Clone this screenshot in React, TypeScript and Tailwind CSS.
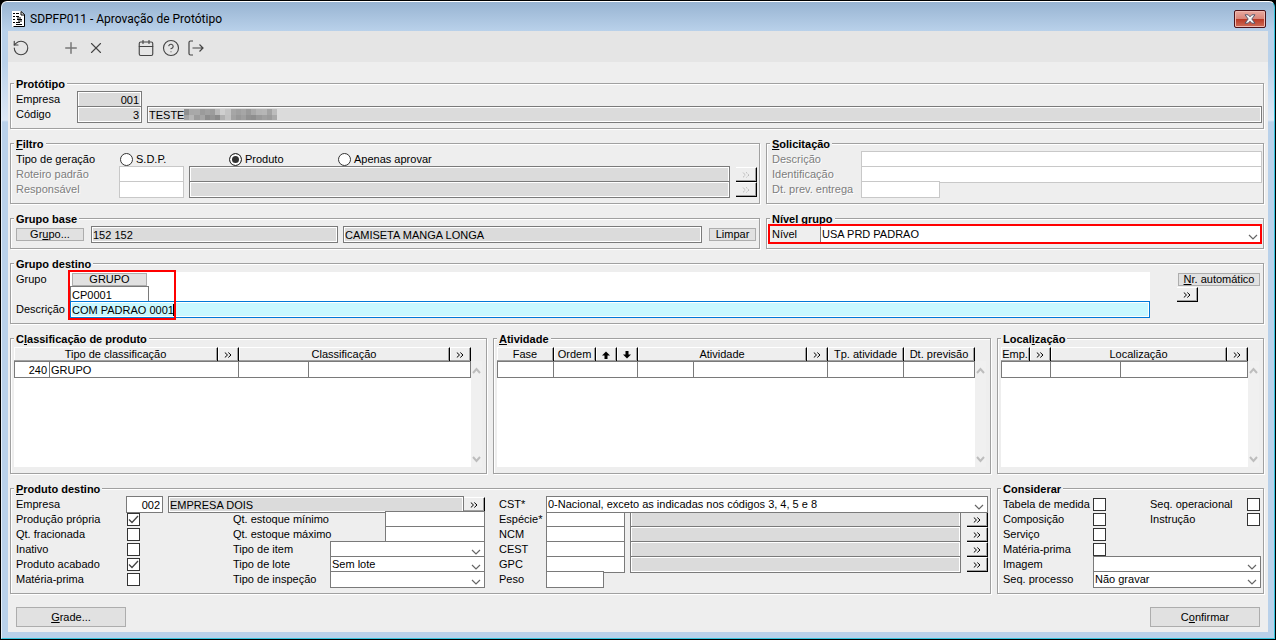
import React, { useState } from "react";
import { Calendar, CircleHelp, Plus, RotateCcw, X } from "lucide-react";

/* ---------- small drawings ---------- */

const ChevronsIcon = ({ faded = false }: { faded?: boolean }) => (
  <svg width="8" height="6" viewBox="0 0 8 6" fill="none" stroke={faded ? "#a5a5a5" : "#000"} strokeWidth="1" strokeDasharray={faded ? "1 1" : undefined} aria-hidden="true">
    <path d="M.8.5L3.500 3 .8 5.500M4.300.5L7 3 4.300 5.500" />
  </svg>
);

const DocumentIcon = () => (
  <svg width="13" height="16" viewBox="0 0 13 16" aria-hidden="true">
    <path d="M0 0h9l3 3v13h-12z" fill="#fff" />
    <path d="M9 0.500L12.500 3.500v12H1.500" fill="none" stroke="#000" />
    <path d="M9 .5v3.500h3.500" fill="none" stroke="#000" />
    <path d="M1 2.500h2M4 2.500h3M1 5.500h2M4 5.500h3M1 8.500h2M5 8.500h5M1 11.500h2M4 11.500h4M4 13.500h6M5 7h4M6 10h4" stroke="#000" />
  </svg>
);

const ExitIcon = () => (
  <svg width="18" height="18" viewBox="0 0 18 18" fill="none" stroke="#444" strokeWidth="1.2" aria-hidden="true">
    <path d="M6 2H3.5Q2 2 2 3.5v11Q2 16 3.5 16H6M5.5 9h10.5M12.5 5.5L16 9l-3.5 3.5" />
  </svg>
);

const ArrowIcon = ({ down = false }: { down?: boolean }) => (
  <svg width="8" height="8" viewBox="0 0 8 8" aria-hidden="true">
    <path d={down ? "M2.500 0h3v3.500H8L4 7.500 0 3.500h2.500z" : "M2.500 8h3V4.500H8L4 .5 0 4.500h2.500z"} fill="#000" />
  </svg>
);

const ScrollChevron = ({ down = false }: { down?: boolean }) => (
  <svg width="9" height="7" viewBox="0 0 9 7" fill="none" stroke="#bdbdbd" strokeWidth="2" aria-hidden="true">
    <path d={down ? "M1 1l3.5 4L8 1" : "M1 6l3.5-4L8 6"} />
  </svg>
);

const mosaic = [
  "#8f8f8f", "#a8a8a8", "#a9a9a9", "#9b9b9b", "#a1a1a1", "#9c9c9c", "#b9b9b9", "#cfcfcf", "#c4c4c4",
  "#a6a6a6", "#a0a0a0", "#a6a6a6", "#9a9a9a", "#a9a9a9", "#b4b4b4", "#b6b6b6", "#a3a3a3", "#bcbcbc",
  "#a4a4a4", "#b6b6b6", "#9c9c9c", "#a5a5a5", "#8d8d8d", "#949494", "#8a8a8a", "#b0b0b0", "#c2c2c2",
  "#a2a2a2", "#989898", "#9f9f9f", "#919191", "#8e8e8e", "#999999", "#a0a0a0", "#9b9b9b", "#a9a9a9",
];

const HiddenName = () => (
  <svg className="absolute left-[37px] top-[3px]" width="93" height="11" viewBox="0 0 90 12" preserveAspectRatio="none" shapeRendering="crispEdges" aria-hidden="true">
    {mosaic.map((fill, i) => (
      <rect key={i} x={(i % 18) * 5} y={Math.floor(i / 18) * 6} width="5" height="6" fill={fill} />
    ))}
  </svg>
);

/* ---------- controls ---------- */

type GroupProps = { title: React.ReactNode; children: React.ReactNode };

const Group = ({ title, children }: GroupProps) => (
  <fieldset className="min-w-0 border border-[#a0a0a0] pt-[2px] pr-px pb-[6px] pl-[3px] shadow-[inset_1px_1px_0_#fff,1px_1px_0_#fff]">
    <legend className="bg-[#eee] px-[2px] pt-[2px] text-[11px] leading-[11px] font-bold">{title}</legend>
    {children}
  </fieldset>
);

const Row = ({ children, className = "pl-[2px]" }: { children?: React.ReactNode; className?: string }) => (
  <div className={`flex h-[15px] items-center ${className}`}>{children}</div>
);

type LabelProps = { htmlFor?: string; className?: string; disabled?: boolean; children: React.ReactNode };

const Label = ({ htmlFor, className = "", disabled, children }: LabelProps) => (
  <label
    htmlFor={htmlFor}
    className={`shrink-0 whitespace-nowrap ${disabled ? "text-[#7d7d7d] [text-shadow:1px_1px_0_#fff]" : ""} ${className}`}
  >
    {children}
  </label>
);

type FieldProps = {
  id?: string;
  label?: string;
  value?: string;
  className?: string;
  kind?: "edit" | "locked" | "disabled" | "focused";
};

const fieldKinds = {
  edit: "border-[#7a7a7a] bg-white",
  locked: "border-[#7a7a7a] bg-[#dbdbdb] shadow-[inset_0_0_0_1px_#fff]",
  disabled: "border-[#c8c8c8] bg-white",
  focused: "border-[#0078d7] bg-[#c8f8ff] shadow-[inset_0_0_0_1px_#fff]",
};

const Field = ({ id, label, value = "", className = "", kind = "edit" }: FieldProps) => (
  <input
    id={id}
    type="text"
    aria-label={label}
    defaultValue={value}
    readOnly={kind === "locked"}
    disabled={kind === "disabled"}
    className={`h-[17px] min-w-0 border pr-[2px] pl-px outline-none ${fieldKinds[kind]} ${className}`}
  />
);

type SelectProps = { id: string; options: string[]; className?: string; plain?: boolean };

const Select = ({ id, options, className = "", plain }: SelectProps) => (
  <span className={`relative flex h-[17px] min-w-0 ${className}`}>
    <select
      id={id}
      className={`w-full appearance-none border bg-white px-px pb-px outline-none ${plain ? "border-white border-l-[#7a7a7a]" : "border-[#7a7a7a]"}`}
    >
      {options.map((o) => (
        <option key={o}>{o}</option>
      ))}
    </select>
    <svg className="pointer-events-none absolute right-[4px] bottom-[3px]" width="10" height="6" viewBox="0 0 10 6" fill="none" stroke="#666" strokeWidth="1.2" aria-hidden="true">
      <path d="M1 1l4 4 4-4" />
    </svg>
  </span>
);

const Check = ({ id, checked = false }: { id: string; checked?: boolean }) => {
  const [on, setOn] = useState(checked);
  return (
    <span className="relative flex shrink-0">
      <input
        id={id}
        type="checkbox"
        checked={on}
        onChange={(e) => setOn(e.target.checked)}
        className="size-[13px] appearance-none border border-[#333] bg-white"
      />
      {on && (
        <svg className="pointer-events-none absolute inset-0" width="13" height="13" viewBox="0 0 13 13" fill="none" stroke="#444" strokeWidth="1.3" aria-hidden="true">
          <path d="M2 6.5l3 3 6-6.5" />
        </svg>
      )}
    </span>
  );
};

const LookupButton = ({ label, disabled = false }: { label: string; disabled?: boolean }) => (
  <button
    type="button"
    aria-label={label}
    disabled={disabled}
    className="flex h-[15px] w-[21px] shrink-0 items-center justify-center border-t border-r border-b border-t-white border-r-black border-b-black bg-[#eee] shadow-[inset_-1px_-1px_0_#a0a0a0]"
  >
    <ChevronsIcon faded={disabled} />
  </button>
);

const FlatButton = ({ children, className }: { children: React.ReactNode; className: string }) => (
  <button type="button" className={`flex shrink-0 items-center justify-center border border-[#adadad] bg-[#e1e1e1] whitespace-nowrap ${className}`}>
    {children}
  </button>
);

/* ---------- grids ---------- */

type Head = { content: React.ReactNode; span?: number };
type Cell = { text?: string; span?: number; right?: boolean };

const DataGrid = ({ cols, heads, cells }: { cols: string[]; heads: Head[]; cells: Cell[] }) => (
  <div className="mr-[3px] flex h-[120px]">
    <div className="min-w-0 flex-1 bg-white">
      <table className="w-full table-fixed border-separate border-spacing-0">
        <colgroup>
          {cols.map((c, i) => (
            <col key={i} className={c} />
          ))}
        </colgroup>
        <thead>
          <tr>
            {heads.map((h, i) => (
              <th
                key={i}
                colSpan={h.span}
                className="h-[14px] border-t border-r border-t-white border-r-black bg-[#eee] p-0 leading-[13px] font-normal whitespace-nowrap shadow-[inset_-1px_-1px_0_#a0a0a0,inset_1px_0_0_#fff]"
              >
                <span className="flex items-center justify-center">{h.content}</span>
              </th>
            ))}
          </tr>
        </thead>
        <tbody>
          <tr>
            {cells.map((c, i) => (
              <td
                key={i}
                colSpan={c.span}
                className={`h-[17px] border-y border-r border-[#7a7a7a] pt-[2px] pr-[2px] pb-0 pl-px first:border-l ${c.right ? "text-right" : ""}`}
              >
                {c.text}
              </td>
            ))}
          </tr>
        </tbody>
      </table>
    </div>
    <div className="mt-[14px] flex w-[11px] shrink-0 flex-col items-center justify-between bg-[#f0f0f0] pt-[6px] pb-[4px]">
      <ScrollChevron />
      <ScrollChevron down />
    </div>
  </div>
);

/* ---------- page ---------- */

const Toolbar = () => (
  <div className="flex h-[31px] items-center bg-[#e5e5e5] pt-[3px] pl-[4px] text-[#444]">
    <button type="button" aria-label="Desfazer" className="mr-[32px]"><RotateCcw size={18} strokeWidth={1.5} /></button>
    <button type="button" aria-label="Novo" className="mr-[7px] text-[#777]"><Plus size={18} strokeWidth={2} /></button>
    <button type="button" aria-label="Excluir" className="mr-[32px]"><X size={18} strokeWidth={1.5} /></button>
    <button type="button" aria-label="Calendário" className="mr-[7px]"><Calendar size={18} strokeWidth={1.5} /></button>
    <button type="button" aria-label="Ajuda" className="mr-[7px]"><CircleHelp size={18} strokeWidth={1.5} /></button>
    <button type="button" aria-label="Sair"><ExitIcon /></button>
  </div>
);

const TitleBar = () => (
  <header className="flex h-[29px] items-center pt-[5px] pl-[4px]">
    <DocumentIcon />
    <h1 className="ml-[5px] flex-1 pt-px font-[Roboto,sans-serif] text-[12px]">SDPFP011 - Aprovação de Protótipo</h1>
    <button
      type="button"
      aria-label="Fechar"
      className="mr-[2px] flex h-[18px] w-[32px] items-center justify-center rounded-[2px] border border-[#4b1219] bg-[linear-gradient(#e9a99f_0%,#d9867a_48%,#b93a26_52%,#cf6d57_100%)] shadow-[inset_0_0_0_1px_#f0b9b0]"
    >
      <svg width="12" height="10" viewBox="0 0 12 10" aria-hidden="true">
        <path d="M1 .8h3.2L6 2.8 7.800.8H11L7.800 5 11 9.200H7.800L6 7.200 4.200 9.200H1L4.200 5z" fill="#f4f4f4" stroke="#4d5066" strokeWidth=".9" />
      </svg>
    </button>
  </header>
);

const radios = ["S.D.P.", "Produto", "Apenas aprovar"];

const Filter = () => {
  const [kind, setKind] = useState("Produto");
  return (
    <Group title={<><u>F</u>iltro</>}>
      <Row>
        <span className="w-[104px] shrink-0">Tipo de geração</span>
        {radios.map((r) => (
          <label key={r} className="flex w-[109px] items-center gap-[3px] whitespace-nowrap">
            <input
              type="radio"
              name="tipo"
              checked={kind === r}
              onChange={() => setKind(r)}
              className="size-[13px] shrink-0 appearance-none rounded-full border border-[#333] bg-white checked:bg-[#333] checked:shadow-[inset_0_0_0_2px_#fff]"
            />
            {r}
          </label>
        ))}
      </Row>
      {["Roteiro padrão", "Responsável"].map((l) => (
        <Row key={l} className="pr-px pl-[2px]">
          <Label htmlFor={l} disabled className="w-[103px]">{l}</Label>
          <Field id={l} kind="disabled" className="w-[65px]" />
          <Field label={`${l} descrição`} kind="locked" className="mr-[6px] ml-[5px] flex-1" />
          <LookupButton label={`Buscar ${l}`} disabled />
        </Row>
      ))}
    </Group>
  );
};

const TargetGroup = () => (
  <Group title="Grupo destino">
    <div className="relative flex pr-[2px] pl-[2px]">
      <div className="flex w-[54px] shrink-0 flex-col justify-between leading-[15px]">
        <label htmlFor="grupo">Grupo</label>
        <label htmlFor="descricao" className="whitespace-nowrap">Descrição</label>
      </div>
      <div className="flex h-[45px] min-w-0 flex-1 flex-col bg-white">
        <div className="flex h-[15px] items-center pl-[2px]">
          <FlatButton className="h-[13px] w-[75px]">GRUPO</FlatButton>
        </div>
        <div className="flex h-[15px] items-center">
          <Field id="grupo" value="CP0001" className="w-[79px]" />
        </div>
        <div className="relative flex h-[15px] items-center">
          <Field id="descricao" value="COM PADRAO 0001" kind="focused" className="w-full" />
          <span className="absolute left-[103px] h-[12px] w-px bg-black" />
        </div>
      </div>
      <div className="ml-[27px] flex w-[83px] shrink-0 flex-col">
        <div className="flex h-[15px] items-center pl-px">
          <FlatButton className="h-[13px] w-full"><span><u>N</u>r. automático</span></FlatButton>
        </div>
        <LookupButton label="Buscar grupo" />
      </div>
      <div className="pointer-events-none absolute -top-[2px] -bottom-[3px] left-[54px] w-[108px] border-2 border-[#f00]" />
    </div>
  </Group>
);

const flags = [
  { label: "Produção própria", checked: true },
  { label: "Qt. fracionada" },
  { label: "Inativo" },
  { label: "Produto acabado", checked: true },
  { label: "Matéria-prima" },
];

const quantities = ["Qt. estoque mínimo", "Qt. estoque máximo"];

const types = [
  { label: "Tipo de item", value: "" },
  { label: "Tipo de lote", value: "Sem lote" },
  { label: "Tipo de inspeção", value: "" },
];

const TargetProduct = () => (
  <Group title={<><u>P</u>roduto destino</>}>
    <div className="grid grid-cols-[471fr_504fr]">
      <div className="min-w-0">
        <Row>
          <Label htmlFor="empresa-destino" className="w-[110px]">Empresa</Label>
          <Field id="empresa-destino" value="002" className="w-[37px] text-right" />
          <Field label="Nome da empresa" value="EMPRESA DOIS" kind="locked" className="ml-[5px] flex-1" />
          <LookupButton label="Buscar empresa" />
        </Row>
        <div className="flex">
          <div className="w-[219px] shrink-0">
            {flags.map((f) => (
              <Row key={f.label}>
                <Label htmlFor={f.label} className="w-[111px]">{f.label}</Label>
                <Check id={f.label} checked={f.checked} />
              </Row>
            ))}
          </div>
          <div className="min-w-0 flex-1">
            {quantities.map((q) => (
              <Row key={q} className="justify-between">
                <Label htmlFor={q}>{q}</Label>
                <Field id={q} className="w-[100px]" />
              </Row>
            ))}
            {types.map((t) => (
              <Row key={t.label} className="pl-0">
                <Label htmlFor={t.label} className="w-[97px]">{t.label}</Label>
                <Select id={t.label} options={[t.value]} className="flex-1" />
              </Row>
            ))}
          </div>
        </div>
      </div>
      <div className="min-w-0 pl-[12px]">
        <Row className="pr-px pl-[2px]">
          <Label htmlFor="cst" className="w-[47px]">CST*</Label>
          <Select id="cst" options={["0-Nacional, exceto as indicadas nos códigos 3, 4, 5 e 8"]} className="flex-1" />
        </Row>
        {["Espécie*", "NCM", "CEST", "GPC"].map((l) => (
          <Row key={l} className="pr-px pl-[2px]">
            <Label htmlFor={l} className="w-[47px]">{l}</Label>
            <Field id={l} className="w-[79px]" />
            <Field label={`${l} descrição`} kind="locked" className="mr-[6px] ml-[5px] flex-1" />
            <LookupButton label={`Buscar ${l}`} />
          </Row>
        ))}
        <Row>
          <Label htmlFor="peso" className="w-[47px]">Peso</Label>
          <Field id="peso" className="w-[58px]" />
        </Row>
      </div>
    </div>
  </Group>
);

const considerRows = [
  ["Tabela de medida", "Seq. operacional"],
  ["Composição", "Instrução"],
  ["Serviço"],
  ["Matéria-prima"],
];

const Consider = () => (
  <Group title="Considerar">
    {considerRows.map(([first, second]) => (
      <Row key={first} className="pr-[2px] pl-[2px]">
        <Label htmlFor={`c-${first}`} className="w-[90px]">{first}</Label>
        <Check id={`c-${first}`} />
        {second && (
          <>
            <Label htmlFor={`c-${second}`} className="ml-[44px] flex-1">{second}</Label>
            <Check id={`c-${second}`} />
          </>
        )}
      </Row>
    ))}
    <Row className="pr-px pl-[2px]">
      <Label htmlFor="imagem" className="w-[90px]">Imagem</Label>
      <Select id="imagem" options={[""]} className="flex-1" />
    </Row>
    <Row className="pr-px pl-[2px]">
      <Label htmlFor="seq-processo" className="w-[90px]">Seq. processo</Label>
      <Select id="seq-processo" options={["Não gravar"]} className="flex-1" />
    </Row>
  </Group>
);

const lookup: Head = { content: <ChevronsIcon /> };

function App() {
  return (
    <div className="flex min-h-screen bg-black p-px font-['Liberation_Sans',Arial,sans-serif] text-[11px] leading-[13px] text-black">
      <div className="flex min-w-0 flex-1 flex-col rounded-t-[6px] border border-t-white border-r-[#35c3dc] border-b-[#35c3dc] border-l-[#e6f0fa] bg-[linear-gradient(#98b4d2_0px,#b9d1ea_29px,#b9d1ea_60px,#dde8f5_118px,#b9d1ea_120px)] px-[6px] pb-[6px]">
        <TitleBar />
        <main className="flex-1 bg-[#eee]">
          <Toolbar />
          <div className="flex flex-col gap-[8px] pt-[15px] pr-[4px] pb-[5px] pl-[2px]">
            <Group title="Protótipo">
              <Row>
                <Label htmlFor="empresa" className="w-[61px]">Empresa</Label>
                <Field id="empresa" value="001" kind="locked" className="w-[65px] text-right" />
              </Row>
              <Row>
                <Label htmlFor="codigo" className="w-[61px]">Código</Label>
                <Field id="codigo" value="3" kind="locked" className="w-[65px] text-right" />
                <span className="relative ml-[5px] flex min-w-0 flex-1">
                  <Field label="Nome do protótipo" value="TESTE" kind="locked" className="w-full" />
                  <HiddenName />
                </span>
              </Row>
            </Group>

            <div className="grid grid-cols-[750fr_498fr] gap-x-[6px] gap-y-[8px]">
              <Filter />
              <Group title={<><u>S</u>olicitação</>}>
                <Row>
                  <Label htmlFor="sol-descricao" disabled className="w-[89px]">Descrição</Label>
                  <Field id="sol-descricao" kind="disabled" className="flex-1" />
                </Row>
                <Row>
                  <Label htmlFor="sol-ident" disabled className="w-[89px]">Identificação</Label>
                  <Field id="sol-ident" kind="disabled" className="flex-1" />
                </Row>
                <Row>
                  <Label htmlFor="sol-data" disabled className="w-[89px]">Dt. prev. entrega</Label>
                  <Field id="sol-data" kind="disabled" className="w-[79px]" />
                </Row>
              </Group>

              <Group title="Grupo base">
                <Row className="pr-[2px] pl-[2px]">
                  <FlatButton className="mr-[7px] h-[13px] w-[68px]"><span>Gr<u>u</u>po...</span></FlatButton>
                  <Field label="Código do grupo base" value="152 152" kind="locked" className="mr-[5px] flex-[246]" />
                  <Field label="Descrição do grupo base" value="CAMISETA MANGA LONGA" kind="locked" className="mr-[7px] flex-[360]" />
                  <FlatButton className="h-[13px] w-[47px]">Limpar</FlatButton>
                </Row>
              </Group>
              <Group title="Nível grupo">
                <div className="relative">
                  <Row>
                    <Label htmlFor="nivel" className="w-[48px]">Nível</Label>
                    <Select id="nivel" options={["USA PRD PADRAO"]} className="flex-1" plain />
                  </Row>
                  <div className="pointer-events-none absolute -top-[3px] right-0 -bottom-[2px] -left-[2px] border-2 border-[#f00]" />
                </div>
              </Group>
            </div>

            <TargetGroup />

            <div className="grid grid-cols-[477fr_498fr_267fr] gap-[6px]">
              <Group title={<>C<u>l</u>assificação de produto</>}>
                <DataGrid
                  cols={["w-[36px]", "w-[168px]", "w-[21px]", "w-[70px]", "w-[141px]", "w-[21px]"]}
                  heads={[{ content: "Tipo de classificação", span: 2 }, lookup, { content: "Classificação", span: 2 }, lookup]}
                  cells={[{ text: "240", right: true }, { text: "GRUPO", span: 2 }, {}, { span: 2 }]}
                />
              </Group>
              <Group title={<><u>A</u>tividade</>}>
                <DataGrid
                  cols={["w-[57px]", "w-[42px]", "w-[21px]", "w-[21px]", "w-[56px]", "w-[113px]", "w-[21px]", "w-[76px]", "w-[71px]"]}
                  heads={[
                    { content: "Fase" },
                    { content: "Ordem" },
                    { content: <ArrowIcon /> },
                    { content: <ArrowIcon down /> },
                    { content: "Atividade", span: 2 },
                    lookup,
                    { content: "Tp. atividade" },
                    { content: "Dt. previsão" },
                  ]}
                  cells={[{}, { span: 3 }, {}, { span: 2 }, {}, {}]}
                />
              </Group>
              <Group title={<>Local<u>i</u>zação</>}>
                <DataGrid
                  cols={["w-[29px]", "w-[21px]", "w-[70px]", "w-[106px]", "w-[21px]"]}
                  heads={[{ content: "Emp." }, lookup, { content: "Localização", span: 2 }, lookup]}
                  cells={[{ span: 2 }, {}, { span: 2 }]}
                />
              </Group>
            </div>

            <div className="grid grid-cols-[981fr_267fr] gap-[6px]">
              <TargetProduct />
              <Consider />
            </div>

            <div className="mt-[5px] flex justify-between pr-[4px] pl-[6px]">
              <FlatButton className="h-[20px] w-[110px]"><span><u>G</u>rade...</span></FlatButton>
              <FlatButton className="h-[20px] w-[110px]"><span>C<u>o</u>nfirmar</span></FlatButton>
            </div>
          </div>
        </main>
      </div>
    </div>
  );
}

export default App;
